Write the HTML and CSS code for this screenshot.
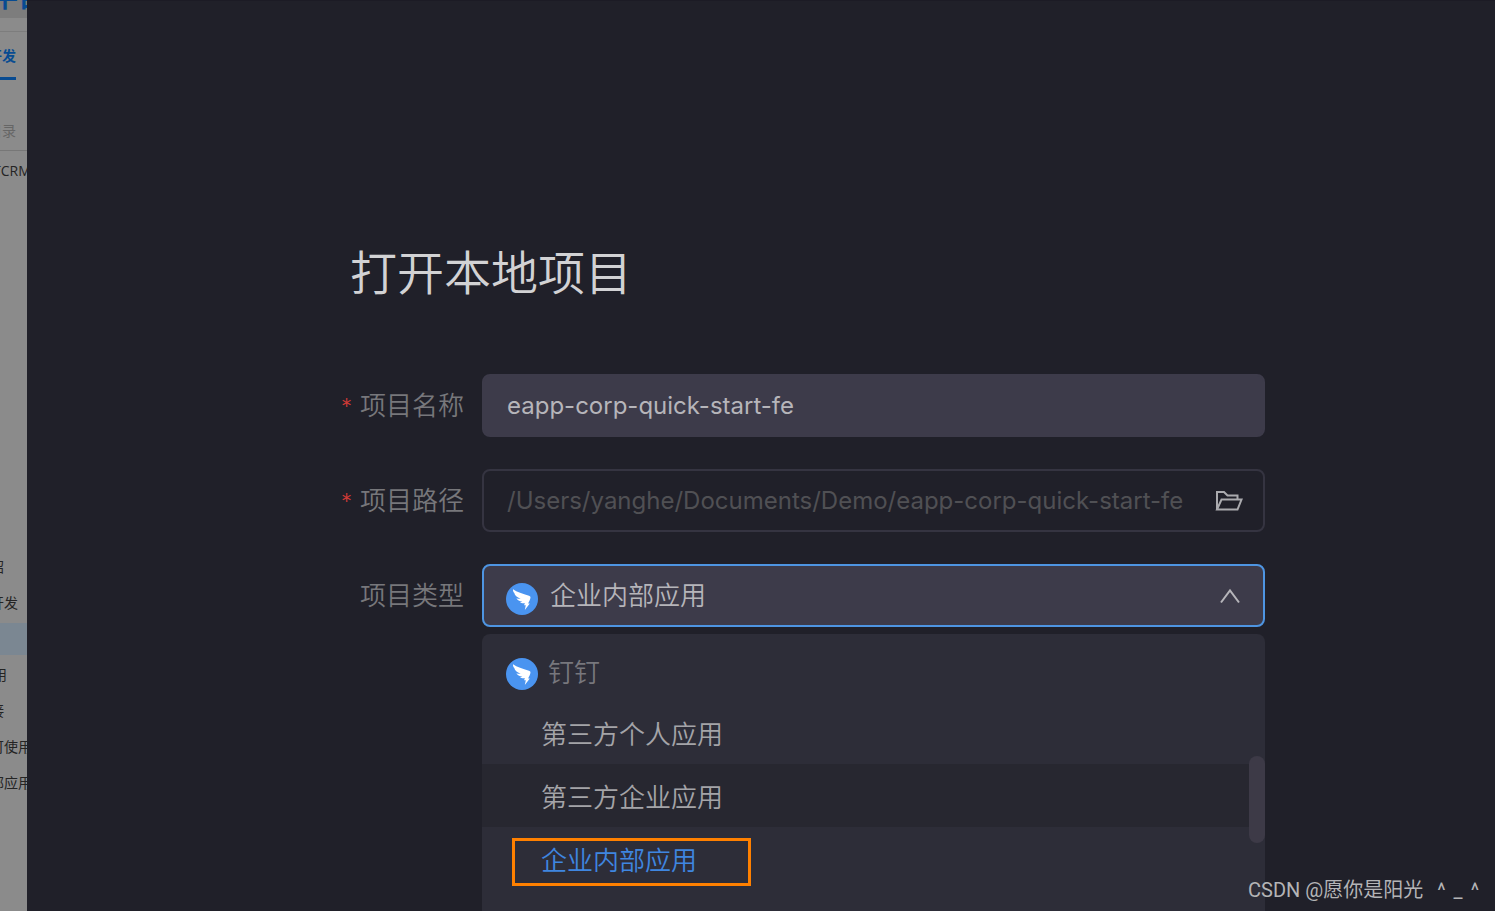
FILE: index.html
```html
<!DOCTYPE html>
<html lang="zh-CN">
<head>
<meta charset="utf-8">
<title>打开本地项目</title>
<link rel="stylesheet" href="styles.css">
</head>
<body>
<svg class="defs" aria-hidden="true">
  <symbol id="wing" viewBox="0 0 32 32">
    <circle cx="16" cy="16" r="16" fill="#4a94f0"/>
    <path fill="#fff" d="M7 6.200C11 9 16.500 10.600 23 12.700c1.500.6 1.700 1.400 1.300 2.800-.6 2-1.500 3.400-2.100 4.900h1.600L18.800 27l1-4.700h-1.700l.8-2.200c-1.800.5-3.800 0-5-1.200 1 .1 1.800 0 2.500-.2-3-.4-5.100-1.600-6-3.500 1.400.5 2.900.7 4.200.5C10.900 14.300 8.800 12.300 8.300 10 7.300 8.800 6.800 7.600 7 6.200z"/>
  </symbol>
</svg>
<div class="app">
  <aside class="side">
    <div class="side-inner">
      <div class="brand">平台</div>
      <nav class="tabs"><a class="tab" href="#">开发</a></nav>
      <h2 class="catalog">目录</h2>
      <p class="org">TCRM</p>
      <ul class="menu">
        <li><a href="#">绍</a></li>
        <li><a href="#">开发</a></li>
        <li class="current"><a href="#" aria-label="当前"></a></li>
        <li class="inset"><a href="#">用</a></li>
        <li><a href="#">接</a></li>
        <li><a href="#">可使用</a></li>
        <li><a href="#">部应用</a></li>
      </ul>
    </div>
  </aside>
  <main class="dialog">
    <form class="form">
      <h1 class="title">打开本地项目</h1>
      <div class="row">
        <label class="label" for="name"><span class="star">*</span>项目名称</label>
        <div class="field filled"><input id="name" type="text" value="eapp-corp-quick-start-fe"></div>
      </div>
      <div class="row">
        <label class="label" for="path"><span class="star">*</span>项目路径</label>
        <div class="field">
          <input id="path" type="text" placeholder="/Users/yanghe/Documents/Demo/eapp-corp-quick-start-fe">
          <button class="browse" type="button" aria-label="选择文件夹">
            <svg width="28" height="22" viewBox="0 0 28 22" fill="none" stroke="currentColor" stroke-width="2"><path d="M2 19.500V2h7l3.500 3.500H22.500V9.500M2 19.500L6.500 9.500H26.500L22.500 19.500z"/></svg>
          </button>
        </div>
      </div>
      <div class="row">
        <label class="label" for="type">项目类型</label>
        <div class="field filled focus">
          <svg class="logo" aria-hidden="true"><use href="#wing"/></svg>
          <select id="type"><option>企业内部应用</option></select>
          <svg class="chevron" width="22" height="16" viewBox="0 0 22 16" fill="none" stroke="currentColor" stroke-width="2" aria-hidden="true"><path d="M2 14.500L11 2.500l9 12"/></svg>
        </div>
      </div>
      <div class="dropdown">
        <div class="group"><svg class="logo" aria-hidden="true"><use href="#wing"/></svg><span class="group-name">钉钉</span></div>
        <button class="option" type="button">第三方个人应用</button>
        <button class="option hover" type="button">第三方企业应用</button>
        <button class="option selected" type="button"><span class="mark"></span>企业内部应用</button>
        <div class="option"></div>
        <div class="thumb"></div>
      </div>
    </form>
    <div class="credit"><span>CSDN @愿你是阳光</span><span class="face"><span>^</span><span>_</span><span>^</span></span></div>
  </main>
</div>
</body>
</html>
```
FILE: styles.css
```css
* { box-sizing: border-box; }
body {
  margin: 0;
  background: #202029;
  font-family: Inter, "Noto Sans CJK SC", sans-serif;
}
.defs { display: none; }
.app { display: flex; height: 100vh; overflow: hidden; }

.side {
  flex: none;
  width: 27px;
  overflow: hidden;
  background: #8b8b8b;
  color: #242424;
  font-size: 14px;
}
.side-inner { width: 80px; margin-left: -12px; white-space: nowrap; }
.brand {
  display: flex;
  align-items: flex-end;
  height: 18px;
  padding: 0 0 5px 4px;
  overflow: hidden;
  background: #7d7d7d;
  color: #084b91;
  font-size: 26px;
  font-weight: 700;
  line-height: 30px;
}
.tabs { border-top: 1px solid #7d7d7d; margin-top: 13px; }
.tab {
  display: block;
  width: 28px;
  height: 48px;
  border-bottom: 3px solid #084b91;
  color: #084b91;
  font-weight: 700;
  line-height: 47px;
  text-decoration: none;
}
.catalog {
  margin: 0;
  padding-top: 31px;
  height: 71px;
  border-bottom: 1px solid #777;
  color: #666;
  font-size: 14px;
  font-weight: 400;
  line-height: 40px;
}
.org { margin: 0; padding-left: 5px; font-family: "Open Sans", sans-serif; line-height: 40px; }
.menu { margin: 358px 0 0; padding: 0; list-style: none; }
.menu li { height: 36px; padding-left: 2px; line-height: 36px; }
.menu .inset { padding-left: 5px; }
.menu .current { height: 32px; margin: 2px 0; background: #7b8792; }
.menu a { color: inherit; text-decoration: none; }

.dialog {
  position: relative;
  flex: 1;
  min-width: 0;
  border-top: 1px solid #1c1b25;
  background: #202029;
}
.form {
  display: flex;
  flex-direction: column;
  gap: 32px;
  padding: 238px 230px 0 316px;
}
.title {
  margin: 0 0 35px 7px;
  color: #d2d2d4;
  font-size: 47px;
  font-weight: 350;
  line-height: 68px;
}
.row { display: flex; align-items: center; }
.label {
  flex: none;
  display: flex;
  justify-content: flex-end;
  gap: 8px;
  width: 139px;
  padding-right: 18px;
  color: #77777b;
  font-size: 26px;
  font-weight: 350;
  line-height: 40px;
  white-space: nowrap;
}
.star { color: #d03a36; font-size: 22px; }
.field {
  display: flex;
  align-items: center;
  flex: 1;
  min-width: 0;
  height: 63px;
  padding: 0 20px 0 23px;
  border: 2px solid #353441;
  border-radius: 8px;
}
.filled { border-color: #3d3b4a; background: #3d3b4a; }
.focus { border-color: #4e95e2; padding: 0 22px; }
.field input, .field select {
  flex: 1;
  min-width: 0;
  padding: 0;
  border: 0;
  outline: 0;
  background: none;
  color: #b6b5ba;
  font-family: inherit;
  font-size: 24px;
  appearance: none;
}
.field select { height: 58px; padding-left: 12px; font-size: 26px; font-weight: 350; }
.field input::placeholder { color: #505054; opacity: 1; }
.browse { display: flex; padding: 0; border: 0; background: none; color: #aaaaae; }
.chevron { color: #b6b5ba; }
.logo { flex: none; width: 32px; height: 32px; margin-top: 6px; }
.dropdown {
  position: relative;
  margin: -25px 0 0 139px;
  border-radius: 8px;
  background: #2d2d38;
  font-size: 26px;
  font-weight: 350;
}
.group {
  display: flex;
  align-items: center;
  gap: 10px;
  height: 67px;
  padding: 6px 24px 0;
  color: #77777d;
}
.option {
  position: relative;
  display: block;
  width: 100%;
  height: 63px;
  padding: 0 59px;
  border: 0;
  background: none;
  color: #a4a4a8;
  font: inherit;
  text-align: left;
}
.hover { background: #272730; }
.selected { color: #3f86e0; }
.mark {
  position: absolute;
  left: 30px;
  top: 11px;
  width: 239px;
  height: 48px;
  border: 3px solid #ff8000;
}
.thumb {
  position: absolute;
  right: 0;
  top: 122px;
  width: 16px;
  height: 87px;
  border-radius: 8px;
  background: #3d3a47;
}
.credit {
  position: absolute;
  display: flex;
  gap: 14px;
  right: 16px;
  bottom: 6px;
  color: #b4b4b6;
  font: 20px/30px Roboto, "Noto Sans CJK SC", sans-serif;
}
.face { display: flex; gap: 8px; }
```
